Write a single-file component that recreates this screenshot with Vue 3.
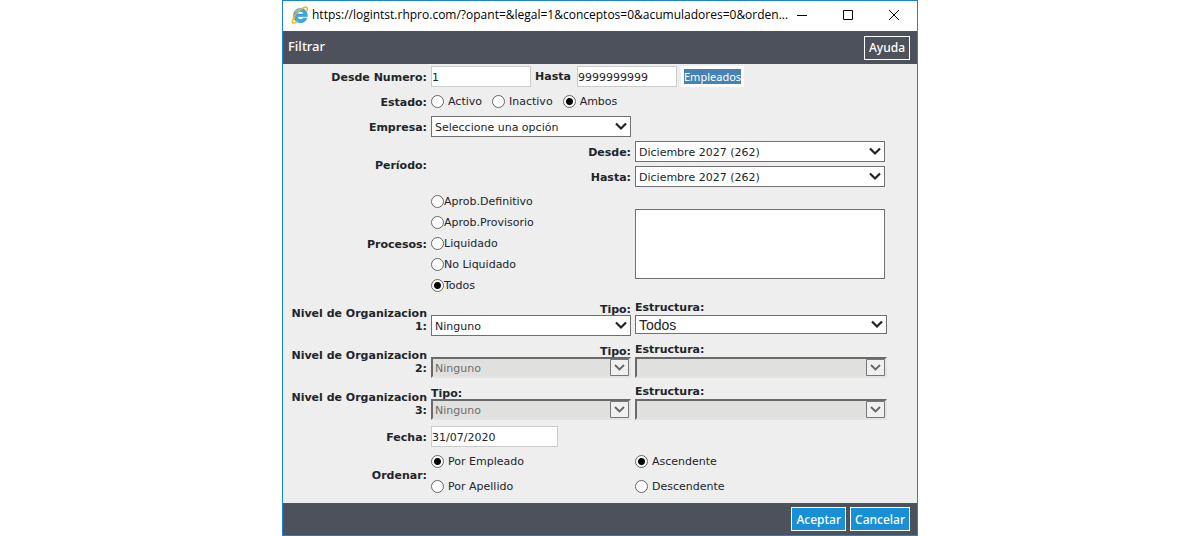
<script setup>
import { ref } from 'vue'

const from = ref('1')
const to = ref('9999999999')
const status = ref('Ambos')
const process = ref('Todos')
const date = ref('31/07/2020')
const sortBy = ref('Por Empleado')
const direction = ref('Ascendente')

const statuses = ['Activo', 'Inactivo', 'Ambos']
const processes = ['Aprob.Definitivo', 'Aprob.Provisorio', 'Liquidado', 'No Liquidado', 'Todos']
const periods = [
  { id: 'period-from', label: 'Desde:' },
  { id: 'period-to', label: 'Hasta:' },
]
const levels = [
  { n: 1, disabled: false, structure: 'Todos', typeEnd: true },
  { n: 2, disabled: true, structure: '', typeEnd: true },
  { n: 3, disabled: true, structure: '', typeEnd: false },
]
</script>

<template>
  <div class="window">
    <div class="titlebar">
      <svg class="logo" viewBox="0 0 18 18" aria-hidden="true">
        <path d="M16.300 10.600H6.200c.2 1.900 1.500 2.900 3.300 2.900 1.200 0 2.100-.5 2.600-1.300h3.700c-.8 2.800-3.200 4.500-6.300 4.500-4.200 0-7-2.900-7-7.100 0-4.200 2.900-7.200 7-7.200 4.400 0 7.100 3.200 6.800 8.200zM12.500 8.100c-.1-1.700-1.300-2.700-3-2.700s-2.900 1-3.200 2.700z" fill="#35aae8" stroke="#1b7fc4" stroke-width=".5" />
        <path d="M3.800 6.500C5.300 4.200 8 3 10.500 3.500" fill="none" stroke="#8fd6f7" stroke-width=".9" />
        <path d="M3.600 11.600C1.200 14.600.9 16.500 2 17c1 .4 2.800-.4 4.700-1.900M2.100 12.300C4 7.900 9.200 3 13.100 1.500c2.500-1 4 .1 2.900 3.300" fill="none" stroke="#f3b61f" stroke-width="1.500" stroke-linecap="round" />
      </svg>
      <span class="address">https://logintst.rhpro.com/?opant=&amp;legal=1&amp;conceptos=0&amp;acumuladores=0&amp;orden...</span>
      <div class="window-buttons">
        <button type="button" aria-label="Minimizar">
          <svg viewBox="0 0 12 12"><path d="M1 6.500h10" /></svg>
        </button>
        <button type="button" aria-label="Maximizar">
          <svg viewBox="0 0 12 12"><path d="M1.500 1.500h9v9h-9z" /></svg>
        </button>
        <button type="button" aria-label="Cerrar">
          <svg viewBox="0 0 12 12"><path d="M1 1l10 10M11 1L1 11" /></svg>
        </button>
      </div>
    </div>

    <header class="header">
      <h1>Filtrar</h1>
      <button type="button" class="action help">Ayuda</button>
    </header>

    <form class="form" @submit.prevent>
      <div class="row">
        <label class="caption" for="from">Desde Numero:</label>
        <div class="wide">
          <input id="from" v-model="from" class="text number" type="text" />
          <label class="until" for="to">Hasta</label>
          <input id="to" v-model="to" class="text number" type="text" />
          <button type="button" class="employees"><span>Empleados</span></button>
        </div>
      </div>

      <div class="row" role="radiogroup" aria-labelledby="status-caption">
        <span id="status-caption" class="caption">Estado:</span>
        <div class="wide statuses">
          <label v-for="s in statuses" :key="s" class="option spaced">
            <input v-model="status" type="radio" name="status" :value="s" />{{ s }}
          </label>
        </div>
      </div>

      <div class="row">
        <label class="caption" for="company">Empresa:</label>
        <select id="company"><option>Seleccione una opción</option></select>
      </div>

      <div class="row">
        <span class="caption">Período:</span>
        <div class="period">
          <div v-for="p in periods" :key="p.id" class="period-row">
            <label class="caption" :for="p.id">{{ p.label }}</label>
            <select :id="p.id" class="right-field"><option>Diciembre 2027 (262)</option></select>
          </div>
        </div>
      </div>

      <div class="row processes" role="radiogroup" aria-labelledby="process-caption">
        <span id="process-caption" class="caption">Procesos:</span>
        <div>
          <label v-for="p in processes" :key="p" class="option stacked">
            <input v-model="process" type="radio" name="process" :value="p" />{{ p }}
          </label>
        </div>
        <select class="list right-field" size="4" aria-label="Lista de procesos"></select>
      </div>

      <div v-for="l in levels" :key="l.n" class="row level">
        <span class="caption">Nivel de Organizacion {{ l.n }}:</span>
        <div class="field">
          <label class="type" :class="{ end: l.typeEnd }" :for="'type-' + l.n">Tipo:</label>
          <select :id="'type-' + l.n" :disabled="l.disabled"><option>Ninguno</option></select>
        </div>
        <div class="field">
          <label :for="'structure-' + l.n">Estructura:</label>
          <select :id="'structure-' + l.n" :class="{ plain: !l.disabled }" :disabled="l.disabled">
            <option>{{ l.structure }}</option>
          </select>
        </div>
      </div>

      <div class="row">
        <label class="caption" for="date">Fecha:</label>
        <input id="date" v-model="date" class="text date" type="text" />
      </div>

      <div class="row">
        <span class="caption">Ordenar:</span>
        <div>
          <label v-for="s in ['Por Empleado', 'Por Apellido']" :key="s" class="option spaced sort">
            <input v-model="sortBy" type="radio" name="sort" :value="s" />{{ s }}
          </label>
        </div>
        <div>
          <label v-for="d in ['Ascendente', 'Descendente']" :key="d" class="option spaced sort">
            <input v-model="direction" type="radio" name="direction" :value="d" />{{ d }}
          </label>
        </div>
      </div>
    </form>

    <footer class="footer">
      <button type="button" class="action primary">Aceptar</button>
      <button type="button" class="action primary">Cancelar</button>
    </footer>
  </div>
</template>

<style>
body {
  background: #fff;
}
</style>

<style scoped>
.window,
.window * {
  box-sizing: border-box;
}

.window {
  max-width: 636px;
  margin: 0 auto;
  border: 1px solid #1883d7;
  background: #eee;
  color: #212529;
  font-family: Verdana, "DejaVu Sans", sans-serif;
  font-size: 11px;
  line-height: 13px;
}

button,
input,
select {
  margin: 0;
  color: inherit;
  font: inherit;
}

.titlebar {
  display: flex;
  align-items: center;
  height: 30px;
  padding: 0 0 2px 8px;
  background: #fff;
  color: #000;
  font-family: "Segoe UI", "Open Sans", sans-serif;
  font-size: 12px;
  line-height: 18px;
}

.logo {
  flex: none;
  width: 18px;
  height: 18px;
  margin-right: 3px;
}

.address {
  flex: 1;
  min-width: 0;
  white-space: nowrap;
}

.window-buttons {
  display: flex;
}

.window-buttons button {
  display: grid;
  place-items: center;
  width: 46px;
  height: 28px;
  padding: 0;
  border: 0;
  background: none;
}

.window-buttons svg {
  width: 12px;
  height: 12px;
  fill: none;
  stroke: #000;
}

.header,
.footer {
  display: flex;
  align-items: center;
  padding: 0 7px 0 5px;
  background: #4d515c;
  color: #fff;
  font-family: "Noto Sans", sans-serif;
}

.header {
  justify-content: space-between;
  height: 33px;
}

.footer {
  justify-content: flex-end;
  gap: 4px;
  height: 32px;
}

h1 {
  margin: 0;
  padding-bottom: 2px;
  font-size: 13px;
  font-weight: 500;
}

.action {
  height: 24px;
  padding: 0 4px;
  border: 1px solid #fff;
  background: none;
  font-size: 12px;
  font-weight: 500;
}

.primary {
  background: #1790d8;
}

.form {
  padding-bottom: 4px;
}

.row {
  display: grid;
  grid-template-columns: 144px 200px minmax(0, 252px);
  column-gap: 4px;
  align-items: center;
  min-height: 25px;
}

.caption {
  padding-top: 2px;
  font-weight: bold;
  text-align: right;
}

.wide,
.period {
  grid-column: 2 / 4;
}

.wide {
  display: flex;
  align-items: center;
}

.text {
  height: 21px;
  padding: 2px 0 0;
  border: 1px solid #ccc;
  background: #fff;
}

.number {
  width: 100px;
}

.date {
  width: 127px;
}

.until {
  width: 46px;
  padding-left: 4px;
  font-weight: bold;
}

.employees {
  height: 21px;
  margin-left: 4px;
  padding: 0 3px;
  border: 0;
  background: #fff;
  color: #fff;
  font-family: "Noto Sans", sans-serif;
}

.employees span {
  display: block;
  background: #4682b4;
  line-height: 15px;
}

.option {
  display: flex;
  align-items: center;
}

.spaced {
  gap: 4px;
}

.stacked {
  height: 21px;
}

.sort {
  height: 25px;
}

.statuses {
  gap: 10px;
}

input[type="radio"] {
  appearance: none;
  flex: none;
  width: 13px;
  height: 13px;
  border: 1px solid #666;
  border-radius: 50%;
  background: #fff;
}

input[type="radio"]:checked {
  background: radial-gradient(circle, #000 3px, #fff 4px);
}

select {
  appearance: none;
  width: 100%;
  height: 21px;
  padding: 2px 20px 0 3px;
  border: 1px solid #707070;
  border-radius: 0;
  background: #fff url("data:image/svg+xml,%3Csvg xmlns='http://www.w3.org/2000/svg' width='12' height='9'%3E%3Cpath d='M1 1.500l5 5 5-5' fill='none' stroke='%23222' stroke-width='2.200'/%3E%3C/svg%3E") no-repeat right 3px top 5px;
}

select:disabled {
  padding-left: 2px;
  border: 2px solid #e4e4e4;
  border-top-color: #696969;
  border-left-color: #696969;
  background: #e0e0df url("data:image/svg+xml,%3Csvg xmlns='http://www.w3.org/2000/svg' width='19' height='17'%3E%3Cpath d='M.5.5h18v16H.5z' fill='%23f0f0f0' stroke='%23777'/%3E%3Cpath d='M5 6l4.500 4.500L14 6' fill='none' stroke='%23666' stroke-width='1.800'/%3E%3C/svg%3E") no-repeat right 0 top 0;
  color: #6d6d6d;
  opacity: 1;
}

.right-field {
  width: calc(100% - 2px);
}

.period-row {
  display: grid;
  grid-template-columns: 200px minmax(0, 252px);
  column-gap: 4px;
  align-items: center;
  height: 25px;
}

.processes {
  min-height: 109px;
}

.list {
  height: 70px;
  padding: 0;
  background: #fff;
}

.level {
  height: 42px;
}

.field {
  align-self: start;
  display: flex;
  flex-direction: column;
  padding-top: 1px;
}

.field label {
  height: 16px;
  font-weight: bold;
  line-height: 18px;
}

.field .type {
  line-height: 22px;
}

.end {
  text-align: right;
}

.plain {
  height: 19px;
  background-position: right 3px top 4px;
  font-family: Arial, "Liberation Sans", sans-serif;
  font-size: 14px;
}
</style>
